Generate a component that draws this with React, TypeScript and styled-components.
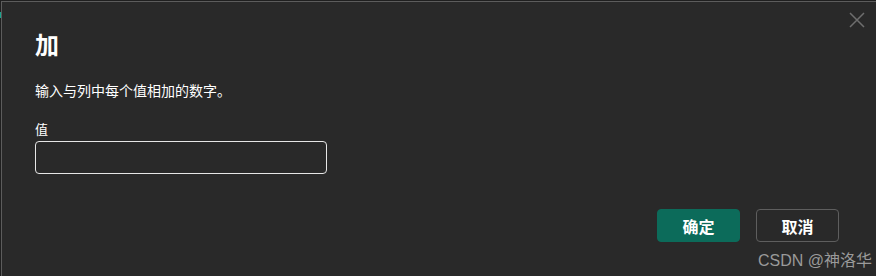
import styled, { createGlobalStyle } from 'styled-components';

const Global = createGlobalStyle`
  html, body {
    margin: 0;
    padding: 0;
    background: #1f1f1f;
  }
  body {
    font-family: "Noto Sans CJK SC", "Noto Sans", sans-serif;
  }
`;

const Screen = styled.div`
  width: 876px;
  height: 276px;
  position: relative;
  overflow: hidden;
  background: #1f1f1f;
  padding: 1px 0 0 1px;
  box-sizing: border-box;
`;

const Dialog = styled.div`
  height: 100%;
  box-sizing: border-box;
  background: #292929;
  border-top: 1px solid #5c5c5c;
  border-left: 1px solid #5c5c5c;
  padding: 22px 37px 0 33px;
  display: flex;
  flex-direction: column;
  position: relative;
  color: #ffffff;
`;

const Close = styled.button`
  position: absolute;
  top: 8px;
  right: 9px;
  width: 20px;
  height: 20px;
  padding: 0;
  border: none;
  background: transparent;
  display: flex;
  align-items: center;
  justify-content: center;
`;

const Title = styled.h2`
  margin: 0;
  font-size: 24px;
  font-weight: 700;
  line-height: 40px;
`;

const Description = styled.p`
  margin: 16px 0 0;
  font-size: 14px;
  line-height: 20px;
`;

const Label = styled.label`
  margin-top: 20px;
  font-size: 13px;
  line-height: 18px;
`;

const Input = styled.input`
  margin-top: 3px;
  width: 292px;
  height: 33px;
  box-sizing: border-box;
  background: #292929;
  border: 1px solid #e6e6e6;
  border-radius: 4px;
  color: #fff;
  font-size: 14px;
  padding: 0 8px;
  outline: none;
`;

const Footer = styled.div`
  margin-top: 35px;
  display: flex;
  justify-content: flex-end;
  gap: 16px;
`;

const Button = styled.button<{ $primary?: boolean }>`
  width: 83px;
  height: 33px;
  box-sizing: border-box;
  border-radius: 4px;
  font-family: "Noto Sans CJK SC", sans-serif;
  font-size: 16px;
  font-weight: 700;
  color: #ffffff;
  background: ${p => (p.$primary ? '#0c6b5a' : '#292929')};
  border: 1px solid ${p => (p.$primary ? '#0c6b5a' : '#5e5e5e')};
`;

const Watermark = styled.div`
  position: absolute;
  right: 4px;
  bottom: 5px;
  font-family: "Liberation Sans", "Noto Sans CJK SC", sans-serif;
  font-size: 16px;
  color: #9a9a9a;
`;

const Accent = styled.div`
  position: absolute;
  left: 0;
  top: 12px;
  width: 2px;
  height: 6px;
  background: #1aa38c;
`;

export default function App() {
  return (
    <>
      <Global />
      <Screen>
        <Accent />
        <Dialog>
          <Close aria-label="close">
            <svg width="16" height="16" viewBox="0 0 16 16">
              <path d="M1 1L15 15M15 1L1 15" stroke="#6e6e6e" strokeWidth="1.5" />
            </svg>
          </Close>
          <Title>加</Title>
          <Description>输入与列中每个值相加的数字。</Description>
          <Label>值</Label>
          <Input />
          <Footer>
            <Button $primary>确定</Button>
            <Button>取消</Button>
          </Footer>
        </Dialog>
        <Watermark>CSDN @神洛华</Watermark>
      </Screen>
    </>
  );
}
